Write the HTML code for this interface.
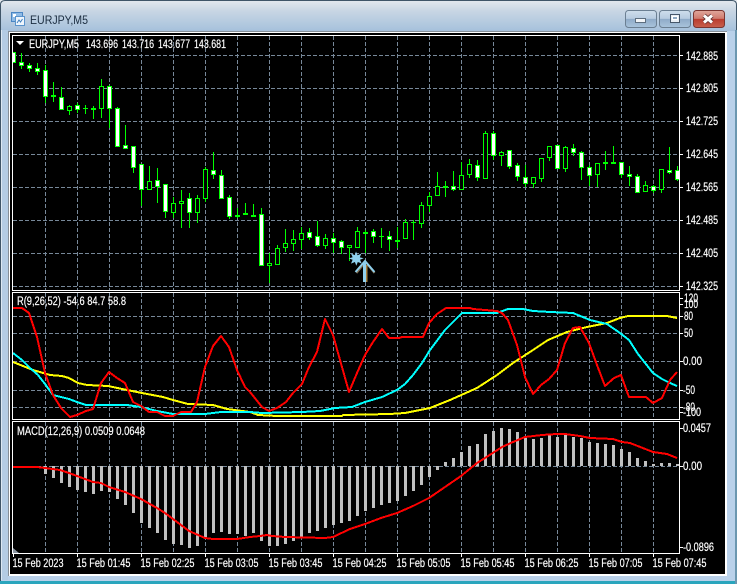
<!DOCTYPE html>
<html><head><meta charset="utf-8"><title>EURJPY,M5</title>
<style>html,body{margin:0;padding:0;background:#b9d1ea;width:737px;height:584px;overflow:hidden}svg{display:block}text{font-family:"Liberation Sans",sans-serif;font-size:11.5px;fill:#fff;stroke:#fff;stroke-width:.18px}</style></head>
<body>
<svg width="737" height="584" viewBox="0 0 737 584" xmlns="http://www.w3.org/2000/svg">
<defs>
<linearGradient id="tb" x1="0" y1="0" x2="0" y2="1"><stop offset="0" stop-color="#e4e9ee"/><stop offset=".35" stop-color="#c8d6e4"/><stop offset="1" stop-color="#a6c1dc"/></linearGradient>
<linearGradient id="btn" x1="0" y1="0" x2="0" y2="1"><stop offset="0" stop-color="#cfdeec"/><stop offset=".48" stop-color="#b6cbe0"/><stop offset=".5" stop-color="#8fabc8"/><stop offset="1" stop-color="#a9c4dc"/></linearGradient>
<linearGradient id="cl" x1="0" y1="0" x2="0" y2="1"><stop offset="0" stop-color="#e0a79c"/><stop offset=".48" stop-color="#cf7b6e"/><stop offset=".5" stop-color="#b93c2e"/><stop offset="1" stop-color="#c8604e"/></linearGradient>
<clipPath id="c1"><rect x="13" y="36" width="666" height="254"/></clipPath>
</defs>
<rect width="737" height="584" fill="#b9d1ea"/>
<rect x="0" y="0" width="737" height="31" fill="url(#tb)"/>
<path d="M0.5 584V5Q0.5 .5 5 .5H732Q736.5 .5 736.5 5V584" fill="none" stroke="#3f5568"/>
<rect x="1" y="30" width="7" height="550" fill="#b4cce4"/>
<rect x="1" y="30" width="1" height="550" fill="#dce8f3"/>
<rect x="0" y="581" width="737" height="3" fill="#2aa5bd"/>
<rect x="735" y="30" width="2" height="554" fill="#6b97b0"/>
<rect x="8" y="31" width="719" height="545" fill="#868f98"/>
<rect x="9" y="32" width="718" height="544" fill="#fff"/>
<rect x="10" y="33" width="715" height="541" fill="#000"/>

<!-- icon -->
<rect x="11.5" y="12.5" width="11" height="9" fill="#8fbbe6" stroke="#4a86c4"/>
<rect x="13" y="14" width="3" height="3" fill="#fff"/>
<rect x="15.5" y="16.5" width="9" height="9" fill="#eef5fc" stroke="#5b94cc"/>
<path d="M17 23l2-3 1.500 2 2-3" fill="none" stroke="#3f7fbe"/>
<text x="30" y="24" textLength="58" lengthAdjust="spacingAndGlyphs" style="fill:#1b2d40;stroke:none;font-size:12px">EURJPY,M5</text>

<!-- buttons -->
<rect x="625.500" y="10.500" width="31" height="17" rx="3" fill="url(#btn)" stroke="#6b7f92"/>
<rect x="635.500" y="18.500" width="10" height="4" fill="#f2f5f8" stroke="#5d6e7f"/>
<rect x="659.500" y="10.500" width="31" height="17" rx="3" fill="url(#btn)" stroke="#6b7f92"/>
<rect x="670.500" y="14.500" width="9" height="8" fill="#e8eef4" stroke="#46576a"/>
<rect x="672.500" y="16.500" width="5" height="3" fill="#8fa9c3" stroke="#fff" stroke-width="1"/>
<rect x="693.500" y="10.500" width="31" height="17" rx="3" fill="url(#cl)" stroke="#7a3530"/>
<path d="M704 15.500l8 7M712 15.500l-8 7" stroke="#5e3030" stroke-width="4.500"/>
<path d="M704 15.500l8 7M712 15.500l-8 7" stroke="#fff" stroke-width="3"/>

<!-- grids -->
<g fill="none" stroke="#778899" stroke-width="1" stroke-dasharray="4 2" shape-rendering="crispEdges">
<path d="M45.500 36V290M77.500 36V290M109.500 36V290M141.500 36V290M173.500 36V290M205.500 36V290M237.500 36V290M269.500 36V290M301.500 36V290M333.500 36V290M365.500 36V290M397.500 36V290M429.500 36V290M461.500 36V290M493.500 36V290M525.500 36V290M557.500 36V290M589.500 36V290M621.500 36V290M653.500 36V290"/>
<path d="M13 55.500H679M13 88.500H679M13 121.500H679M13 154.500H679M13 187.500H679M13 220.500H679M13 253.500H679M13 286.500H679"/>
<path d="M45.500 293V419M77.500 293V419M109.500 293V419M141.500 293V419M173.500 293V419M205.500 293V419M237.500 293V419M269.500 293V419M301.500 293V419M333.500 293V419M365.500 293V419M397.500 293V419M429.500 293V419M461.500 293V419M493.500 293V419M525.500 293V419M557.500 293V419M589.500 293V419M621.500 293V419M653.500 293V419"/>
<path d="M13 316.500H679M13 333.500H679M13 361.500H679M13 390.500H679M13 407.500H679"/>
<path d="M45.500 422V553M77.500 422V553M109.500 422V553M141.500 422V553M173.500 422V553M205.500 422V553M237.500 422V553M269.500 422V553M301.500 422V553M333.500 422V553M365.500 422V553M397.500 422V553M429.500 422V553M461.500 422V553M493.500 422V553M525.500 422V553M557.500 422V553M589.500 422V553M621.500 422V553M653.500 422V553"/>
<path d="M13 466.500H679"/>
</g>

<!-- candles -->
<g clip-path="url(#c1)" shape-rendering="crispEdges" stroke-width="1">
<path fill="none" stroke="#00ff00" d="M13.500 52V63M21.500 53V69M29.500 63V72M37.500 63V75M45.500 65V103M53.500 82V102M61.500 87V110M69.500 105V115M77.500 103V113M85.500 105V114M93.500 106V119M101.500 79V118M109.500 85V128M117.500 107V146M125.500 125V148M133.500 146V173M141.500 164V206M149.500 166V190M157.500 168V203M165.500 184V218M173.500 197V218M181.500 190V228M189.500 193V228M197.500 195V223M205.500 167V202M213.500 152V179M221.500 170V199M229.500 195V219M237.500 208V218M245.500 203V215M253.500 204V217M261.500 208V266M269.500 253V283M277.500 245V265M285.500 229V252M293.500 230V251M301.500 227V249M309.500 228V240M317.500 221V247M325.500 234V249M333.500 233V253M341.500 240V254M349.500 245V261M357.500 227V248M365.500 230V253M373.500 229V243M381.500 228V248M389.500 231V251M397.500 227V248M405.500 219V239M413.500 220V240M421.500 202V228M429.500 192V212M437.500 172V196M445.500 181V197M453.500 171V191M461.500 162V190M469.500 159V178M477.500 160V181M485.500 131V178M493.500 131V160M501.500 151V166M509.500 150V169M517.500 163V181M525.500 165V187M533.500 177V188M541.500 158V182M549.500 146V161M557.500 145V168M565.500 146V172M573.500 144V156M581.500 151V180M589.500 165V186M597.500 163V187M605.500 151V170M613.500 146V164M621.500 162V178M629.500 166V186M637.500 174V192M645.500 181V191M653.500 185V193M661.500 169V193M669.500 147V174M677.500 166V181"/>
<path fill="#000" stroke="#00ff00" d="M51.500 95.500h4v1h-4zM67.500 106.500h4v4h-4zM91.500 108.500h4v1h-4zM99.500 86.500h4v22h-4zM147.500 181.500h4v8h-4zM171.500 203.500h4v9h-4zM179.500 201.500h4v2h-4zM195.500 198.500h4v14h-4zM203.500 169.500h4v29h-4zM235.500 215.500h4v1h-4zM243.500 213.500h4v1h-4zM251.500 215.500h4v1h-4zM267.500 263.500h4v2h-4zM275.500 248.500h4v16h-4zM283.500 243.500h4v4h-4zM291.500 239.500h4v4h-4zM299.500 233.500h4v6h-4zM323.500 238.500h4v7h-4zM347.500 245.500h4v2h-4zM355.500 231.500h4v16h-4zM363.500 232.500h4v1h-4zM395.500 240.500h4v1h-4zM403.500 222.500h4v16h-4zM419.500 205.500h4v18h-4zM427.500 196.500h4v9h-4zM435.500 186.500h4v9h-4zM443.500 186.500h4v1h-4zM459.500 175.500h4v14h-4zM467.500 164.500h4v10h-4zM483.500 133.500h4v45h-4zM499.500 152.500h4v3h-4zM531.500 177.500h4v6h-4zM539.500 158.500h4v20h-4zM547.500 146.500h4v11h-4zM563.500 147.500h4v21h-4zM595.500 163.500h4v11h-4zM603.500 162.500h4v1h-4zM611.500 162.500h4v1h-4zM643.500 185.500h4v6h-4zM659.500 169.500h4v20h-4z"/>
<path fill="#fff" stroke="#00ff00" d="M11.500 52.500h4v10h-4zM19.500 62.500h4v3h-4zM27.500 65.500h4v3h-4zM35.500 68.500h4v3h-4zM43.500 70.500h4v26h-4zM59.500 97.500h4v12h-4zM75.500 105.500h4v4h-4zM107.500 86.500h4v22h-4zM115.500 108.500h4v38h-4zM123.500 145.500h4v3h-4zM131.500 146.500h4v21h-4zM139.500 164.500h4v25h-4zM155.500 180.500h4v6h-4zM163.500 184.500h4v27h-4zM187.500 198.500h4v14h-4zM211.500 170.500h4v4h-4zM219.500 175.500h4v23h-4zM227.500 197.500h4v19h-4zM259.500 214.500h4v51h-4zM307.500 232.500h4v5h-4zM315.500 236.500h4v9h-4zM331.500 238.500h4v4h-4zM339.500 241.500h4v6h-4zM371.500 231.500h4v5h-4zM387.500 236.500h4v3h-4zM451.500 186.500h4v3h-4zM475.500 165.500h4v12h-4zM491.500 133.500h4v22h-4zM507.500 150.500h4v16h-4zM515.500 165.500h4v11h-4zM523.500 177.500h4v6h-4zM555.500 145.500h4v23h-4zM571.500 148.500h4v4h-4zM579.500 152.500h4v15h-4zM587.500 167.500h4v8h-4zM619.500 162.500h4v12h-4zM627.500 174.500h4v2h-4zM635.500 176.500h4v16h-4zM651.500 186.500h4v4h-4zM667.500 170.500h4v2h-4zM675.500 170.500h4v9h-4z"/>
<path fill="none" stroke="#00ff00" d="M83 108.500h5M379 236.500h5M411 222.500h5"/>
</g>

<!-- star and arrow -->
<path d="M356 251.500l1.600 3.800 3.700-1.700-1.500 3.800 4 .9-3.800 1.400 1.700 3.800-3.900-1.500-1.500 3.800-1.400-3.800-3.900 1.600 1.600-3.900-3.900-1.300 3.900-1.100-1.600-3.800 3.800 1.600z" fill="#8fd0ee"/>
<path d="M356.500 273l9-11 9 11" fill="none" stroke="#7a6a50" stroke-width="2"/>
<path d="M366 265V282" stroke="#a8803f" stroke-width="3"/>
<path d="M355.500 272l9.500-11 9.500 11" fill="none" stroke="#8fd0ee" stroke-width="2"/>
<path d="M364.500 263V282" stroke="#8fd0ee" stroke-width="3"/>

<!-- indicator lines -->
<g fill="none" stroke-width="2" stroke-linejoin="round" shape-rendering="crispEdges">
<polyline stroke="#ffff00" points="13,362 33,370 50,375 62,376 69,378 78,383 87,385 108,386 127,390 142,393 163,397 173,400 188,404 213,405 227,409 250,412 258,415 277,416 342,416 343,415 390,414 405,413 430,408 450,400 477,388 497,375 513,363 533,350 548,340 567,332 587,327 607,323 620,318 628,316 667,316 677,318"/>
<polyline stroke="#00ffff" points="13,353 22,360 30,368 38,375 45,384 53,395 69,399 77,402 86,405 127,405 141,407 157,411 173,414 205,414 221,412 250,412 262,413 302,412 320,411 335,408 352,407 365,402 382,397 397,390 405,384 413,375 422,363 430,350 445,330 462,313 497,313 508,309 523,309 533,311 550,312 573,313 590,320 607,324 620,333 629,340 638,354 653,373 662,379 670,383 677,386"/>
<polyline stroke="#ff0000" points="13,308 22,308 29,313 37,337 45,373 53,395 61,408 70,417 77,415 86,411 93,409 101,383 109,372 117,378 125,383 133,402 141,406 149,412 157,412 165,416 173,416 181,412 191,412 197,402 205,367 213,346 221,336 229,347 237,370 245,387 250,392 262,407 269,411 277,408 286,402 293,393 302,384 309,367 317,352 325,319 333,335 349,392 357,373 365,355 373,342 382,329 389,338 399,338 402,337 423,337 429,323 437,314 446,308 470,308 473,309 485,310 497,311 502,313 508,320 517,345 525,377 533,394 541,385 549,379 557,370 565,343 573,328 580,327 589,343 597,365 605,386 614,378 621,375 629,397 646,397 653,403 662,398 670,380 677,372"/>
</g>

<!-- histogram -->
<path shape-rendering="crispEdges" stroke="#c0c0c0" stroke-width="3" fill="none" d="M45.500 466V474M53.500 466V478M61.500 466V483M69.500 466V487M77.500 466V490M85.500 466V492M93.500 466V494M101.500 466V491M109.500 466V492M117.500 466V499M125.500 466V505M133.500 466V513M141.500 466V523M149.500 466V528M157.500 466V533M165.500 466V540M173.500 466V544M181.500 466V545M189.500 466V548M197.500 466V546M205.500 466V538M213.500 466V533M221.500 466V532M229.500 466V534M237.500 466V534M245.500 466V536M253.500 466V533M261.500 466V541M269.500 466V546M277.500 466V546M285.500 466V544M293.500 466V541M301.500 466V538M309.500 466V533M317.500 466V531M325.500 466V528M333.500 466V525M341.500 466V523M349.500 466V521M357.500 466V516M365.500 466V511M373.500 466V508M381.500 466V505M389.500 466V503M397.500 466V501M405.500 466V496M413.500 466V491M421.500 466V485M429.500 466V477M437.500 466V470M445.500 466V462M453.500 466V458M461.500 466V452M469.500 466V446M477.500 466V444M485.500 466V434M493.500 466V431M501.500 466V428M509.500 466V429M517.500 466V432M525.500 466V437M533.500 466V439M541.500 466V438M549.500 466V435M557.500 466V437M565.500 466V435M573.500 466V437M581.500 466V438M589.500 466V442M597.500 466V443M605.500 466V444M613.500 466V445M621.500 466V449M629.500 466V452M637.500 466V458M645.500 466V461M653.500 466V464M661.500 466V463M669.500 466V463M677.500 466V464"/>
<polyline fill="none" stroke="#ff0000" stroke-width="2" stroke-linejoin="round" shape-rendering="crispEdges" points="13,467 37,467 45,468 60,470 69,473 93,482 101,483 109,487 125,492 141,499 157,508 165,513 173,519 189,531 205,538 213,539 237,539 250,537 260,536 267,535 272,536 285,537 325,538 333,537 350,529 365,524 381,518 397,513 413,506 429,498 445,487 461,476 477,463 485,458 502,447 513,442 525,437 542,435 557,434 565,434 580,436 590,438 613,439 622,442 630,443 653,452 667,454 677,458"/>

<path d="M13 548v5h6z" fill="#8c97a3"/>

<!-- panel borders -->
<g shape-rendering="crispEdges" stroke="#fff" fill="none">
<path d="M12.500 35V291M12.500 292V420M12.500 421V554M679.500 35V291M679.500 292V420M679.500 421V554"/>
<path d="M12 35.500H680M12 290.500H680M12 292.500H680M12 419.500H680M12 421.500H680M12 553.500H680"/>
<path d="M679 55.500h4M679 88.500h4M679 121.500h4M679 154.500h4M679 187.500h4M679 220.500h4M679 253.500h4M679 286.500h4M679 298.500h4M679 304.500h4M679 316.500h4M679 333.500h4M679 361.500h4M679 390.500h4M679 407.500h4M679 412.500h4M679 428.500h4M679 466.500h4M679 547.500h4"/>
<path d="M13.500 553v4M77.500 553v4M141.500 553v4M205.500 553v4M269.500 553v4M333.500 553v4M397.500 553v4M461.500 553v4M525.500 553v4M589.500 553v4M653.500 553v4"/>
</g>

<!-- legends -->
<path d="M16 41h8l-4 4z" fill="#fff"/>
<text x="29" y="48" textLength="50" lengthAdjust="spacingAndGlyphs">EURJPY,M5</text>
<text x="86" y="48" textLength="32" lengthAdjust="spacingAndGlyphs">143.696</text>
<text x="122" y="48" textLength="32" lengthAdjust="spacingAndGlyphs">143.716</text>
<text x="158" y="48" textLength="32" lengthAdjust="spacingAndGlyphs">143.677</text>
<text x="194" y="48" textLength="32" lengthAdjust="spacingAndGlyphs">143.681</text>
<text x="17" y="305" textLength="109" lengthAdjust="spacingAndGlyphs">R(9,26,52) -54.6 84.7 58.8</text>
<text x="17" y="435" textLength="128" lengthAdjust="spacingAndGlyphs">MACD(12,26,9) 0.0509 0.0648</text>

<!-- price labels -->
<text x="686" y="60" textLength="32" lengthAdjust="spacingAndGlyphs">142.885</text>
<text x="686" y="92" textLength="32" lengthAdjust="spacingAndGlyphs">142.805</text>
<text x="686" y="125" textLength="32" lengthAdjust="spacingAndGlyphs">142.725</text>
<text x="686" y="158" textLength="32" lengthAdjust="spacingAndGlyphs">142.645</text>
<text x="686" y="191" textLength="32" lengthAdjust="spacingAndGlyphs">142.565</text>
<text x="686" y="224" textLength="32" lengthAdjust="spacingAndGlyphs">142.485</text>
<text x="686" y="257" textLength="32" lengthAdjust="spacingAndGlyphs">142.405</text>
<text x="686" y="290" textLength="32" lengthAdjust="spacingAndGlyphs">142.325</text>
<text x="684" y="302" textLength="14" lengthAdjust="spacingAndGlyphs">120</text>
<text x="684" y="308" textLength="14" lengthAdjust="spacingAndGlyphs">100</text>
<text x="684" y="320" textLength="9" lengthAdjust="spacingAndGlyphs">80</text>
<text x="684" y="337" textLength="9" lengthAdjust="spacingAndGlyphs">50</text>
<text x="683" y="365" textLength="19" lengthAdjust="spacingAndGlyphs">0.00</text>
<text x="683" y="394" textLength="12" lengthAdjust="spacingAndGlyphs">-50</text>
<text x="683" y="411" textLength="12" lengthAdjust="spacingAndGlyphs">-80</text>
<text x="683" y="416" textLength="18" lengthAdjust="spacingAndGlyphs">-100</text>
<text x="683" y="432" textLength="28" lengthAdjust="spacingAndGlyphs">0.0457</text>
<text x="683" y="470" textLength="19" lengthAdjust="spacingAndGlyphs">0.00</text>
<text x="683" y="551" textLength="31" lengthAdjust="spacingAndGlyphs">-0.0896</text>

<!-- time labels -->
<text x="12.500" y="567" textLength="51" lengthAdjust="spacingAndGlyphs">15 Feb 2023</text>
<text x="76.500" y="567" textLength="54" lengthAdjust="spacingAndGlyphs">15 Feb 01:45</text>
<text x="140.500" y="567" textLength="54" lengthAdjust="spacingAndGlyphs">15 Feb 02:25</text>
<text x="204.500" y="567" textLength="54" lengthAdjust="spacingAndGlyphs">15 Feb 03:05</text>
<text x="268.500" y="567" textLength="54" lengthAdjust="spacingAndGlyphs">15 Feb 03:45</text>
<text x="332.500" y="567" textLength="54" lengthAdjust="spacingAndGlyphs">15 Feb 04:25</text>
<text x="396.500" y="567" textLength="54" lengthAdjust="spacingAndGlyphs">15 Feb 05:05</text>
<text x="460.500" y="567" textLength="54" lengthAdjust="spacingAndGlyphs">15 Feb 05:45</text>
<text x="524.500" y="567" textLength="54" lengthAdjust="spacingAndGlyphs">15 Feb 06:25</text>
<text x="588.500" y="567" textLength="54" lengthAdjust="spacingAndGlyphs">15 Feb 07:05</text>
<text x="652.500" y="567" textLength="54" lengthAdjust="spacingAndGlyphs">15 Feb 07:45</text>
</svg>
</body></html>
